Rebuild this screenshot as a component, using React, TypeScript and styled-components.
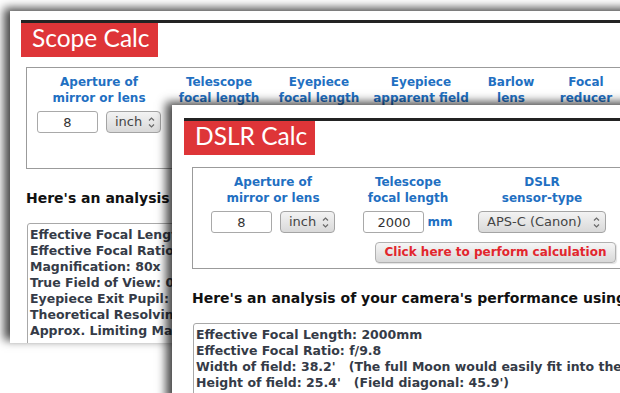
import React from 'react';
import styled, { createGlobalStyle } from 'styled-components';

const Global = createGlobalStyle`
  html, body { margin: 0; padding: 0; background: #fff; }
  body { font-family: "DejaVu Sans", Verdana, sans-serif; }
`;

const Desk = styled.div`
  position: relative;
  width: 620px;
  height: 393px;
  overflow: hidden;
  background: #fff;
`;

const Win = styled.section<{ $x: number; $y: number; $w: number; $h: number; $pt: number; $pl: number }>`
  position: absolute;
  left: ${p => p.$x}px;
  top: ${p => p.$y}px;
  width: ${p => p.$w}px;
  height: ${p => p.$h}px;
  box-sizing: border-box;
  padding: ${p => p.$pt}px 0 0 ${p => p.$pl}px;
  background: #fff;
  overflow: hidden;
  box-shadow: -6px -3px 9px rgba(0, 0, 0, 0.72);
`;

const TopBar = styled.div`
  height: 3px;
  background: #232323;
`;

const TitleTag = styled.h1<{ $w: number }>`
  margin: 0;
  width: ${p => p.$w}px;
  height: 34px;
  box-sizing: border-box;
  padding: 0 0 0 11px;
  background: #de3538;
  color: #fff;
  font: 400 24.5px/1.2 Lato, "Open Sans", sans-serif;
  white-space: nowrap;
`;

const Panel = styled.div<{ $cols: string; $ml: number; $mt: number }>`
  margin: ${p => p.$mt}px 0 0 ${p => p.$ml}px;
  border: 1px solid #9b9b9b;
  padding: 6px 0 5px;
  display: grid;
  grid-template-columns: ${p => p.$cols};
  justify-items: center;
  align-items: start;
`;

const Label = styled.div`
  font: bold 12px/16px "DejaVu Sans", Verdana, sans-serif;
  color: #1f70c2;
  text-align: center;
  white-space: nowrap;
`;

const Control = styled.div`
  margin-top: 5px;
  display: flex;
  align-items: center;
  gap: 8px;
`;

const TextInput = styled.input<{ $w: number }>`
  width: ${p => p.$w}px;
  height: 22px;
  box-sizing: border-box;
  margin: 0;
  padding: 0;
  border: 1px solid #a9a9a9;
  border-radius: 3px;
  background: #fff;
  text-align: center;
  font: 13px/20px "DejaVu Sans", Verdana, sans-serif;
  color: #333;
  outline: none;
`;

const Unit = styled.span`
  margin-left: -5px;
  font: bold 12px/16px "DejaVu Sans", Verdana, sans-serif;
  color: #1f70c2;
`;

const SelectBox = styled.div<{ $w: number }>`
  width: ${p => p.$w}px;
  height: 22px;
  box-sizing: border-box;
  padding: 0 5px 0 8px;
  display: flex;
  align-items: center;
  justify-content: space-between;
  border: 1px solid #a4a4a4;
  border-radius: 4px;
  background: linear-gradient(#f3f3f3, #d9d9d9);
  font: 13px/20px "DejaVu Sans", Verdana, sans-serif;
  color: #444;
  white-space: nowrap;
`;

const CalcButton = styled.div<{ $col: string; $ml: number; $w: number }>`
  grid-column: ${p => p.$col};
  justify-self: start;
  margin: 9px 0 0 ${p => p.$ml}px;
  width: ${p => p.$w}px;
  height: 21px;
  box-sizing: border-box;
  border: 1px solid #b1b1b1;
  border-radius: 4px;
  background: linear-gradient(#f6f6f6, #d8d8d8);
  box-shadow: 1px 1px 1px rgba(0, 0, 0, 0.12);
  text-align: center;
  font: bold 12px/19px "DejaVu Sans", Verdana, sans-serif;
  color: #e2262d;
  white-space: nowrap;
`;

const Heading = styled.h2<{ $ml: number }>`
  margin: 21px 0 0 ${p => p.$ml}px;
  font: bold 14px/17px "DejaVu Sans", Verdana, sans-serif;
  color: #111;
  white-space: nowrap;
`;

const Results = styled.div<{ $ml: number; $pt: number }>`
  margin: 16px 0 0 ${p => p.$ml}px;
  height: 200px;
  padding: ${p => p.$pt}px 0 0 2px;
  border: 1px solid #a8a8a8;
  border-radius: 3px;
  background: #fff;
`;

const ResultLine = styled.div`
  font: bold 12.5px/16px "DejaVu Sans", Verdana, sans-serif;
  color: #353b47;
  white-space: pre;
`;

const Arrows = () => (
  <svg width="7" height="13" viewBox="0 0 7 13" fill="none" stroke="#6a6a6a" strokeWidth="1.2">
    <polyline points="1,4.5 3.5,2 6,4.5" />
    <polyline points="1,8.5 3.5,11 6,8.5" />
  </svg>
);

const Select = ({ w, value }: { w: number; value: string }) => (
  <SelectBox $w={w}>
    <span>{value}</span>
    <Arrows />
  </SelectBox>
);

const TwoLine = ({ a, b }: { a: string; b: string }) => (
  <Label>
    {a}
    <br />
    {b}
  </Label>
);

const scopeResults = [
  'Effective Focal Length: 1200mm',
  'Effective Focal Ratio: f/5.9',
  'Magnification: 80x',
  'True Field of View: 0.65°',
  'Eyepiece Exit Pupil: 2.5mm',
  'Theoretical Resolving Power: 0.57"',
  'Approx. Limiting Magnitude: 14.3',
];

const dslrResults = [
  'Effective Focal Length: 2000mm',
  'Effective Focal Ratio: f/9.8',
  "Width of field: 38.2'   (The full Moon would easily fit into the field)",
  "Height of field: 25.4'   (Field diagonal: 45.9')",
];

export default function App() {
  return (
    <Desk>
      <Global />
      <Win $x={10} $y={11} $w={640} $h={332} $pt={9} $pl={11}>
        <TopBar />
        <TitleTag $w={137}>Scope Calc</TitleTag>
        <Panel $cols="144px 96px 104px 100px 80px 70px" $ml={5} $mt={10}>
          <TwoLine a="Aperture of" b="mirror or lens" />
          <TwoLine a="Telescope" b="focal length" />
          <TwoLine a="Eyepiece" b="focal length" />
          <TwoLine a="Eyepiece" b="apparent field" />
          <TwoLine a="Barlow" b="lens" />
          <TwoLine a="Focal" b="reducer" />
          <Control>
            <TextInput $w={61} defaultValue="8" readOnly />
            <Select w={55} value="inch" />
          </Control>
          <Control>
            <TextInput $w={50} defaultValue="1200" readOnly />
            <Unit>mm</Unit>
          </Control>
          <Control>
            <TextInput $w={50} defaultValue="15" readOnly />
            <Unit>mm</Unit>
          </Control>
          <Control>
            <TextInput $w={50} defaultValue="52" readOnly />
            <Unit>°</Unit>
          </Control>
          <Control>
            <Select w={60} value="none" />
          </Control>
          <Control>
            <Select w={60} value="none" />
          </Control>
          <CalcButton $col="2 / 6" $ml={60} $w={241}>
            Click here to perform calculation
          </CalcButton>
        </Panel>
        <Heading $ml={5}>Here's an analysis of your telescope's performance</Heading>
        <Results $ml={6} $pt={3}>
          {scopeResults.map(r => (
            <ResultLine key={r}>{r}</ResultLine>
          ))}
        </Results>
      </Win>

      <Win $x={172} $y={105} $w={470} $h={300} $pt={13} $pl={12}>
        <TopBar />
        <TitleTag $w={131}>DSLR Calc</TitleTag>
        <Panel $cols="160px 110px 158px" $ml={8} $mt={12}>
          <TwoLine a="Aperture of" b="mirror or lens" />
          <TwoLine a="Telescope" b="focal length" />
          <TwoLine a="DSLR" b="sensor-type" />
          <Control>
            <TextInput $w={61} defaultValue="8" readOnly />
            <Select w={55} value="inch" />
          </Control>
          <Control>
            <TextInput $w={61} defaultValue="2000" readOnly />
            <Unit>mm</Unit>
          </Control>
          <Control>
            <Select w={128} value="APS-C (Canon)" />
          </Control>
          <CalcButton $col="2 / 4" $ml={22} $w={241}>
            Click here to perform calculation
          </CalcButton>
        </Panel>
        <Heading $ml={8}>Here's an analysis of your camera's performance using this telescope</Heading>
        <Results $ml={9} $pt={3}>
          {dslrResults.map(r => (
            <ResultLine key={r}>{r}</ResultLine>
          ))}
        </Results>
      </Win>
    </Desk>
  );
}
